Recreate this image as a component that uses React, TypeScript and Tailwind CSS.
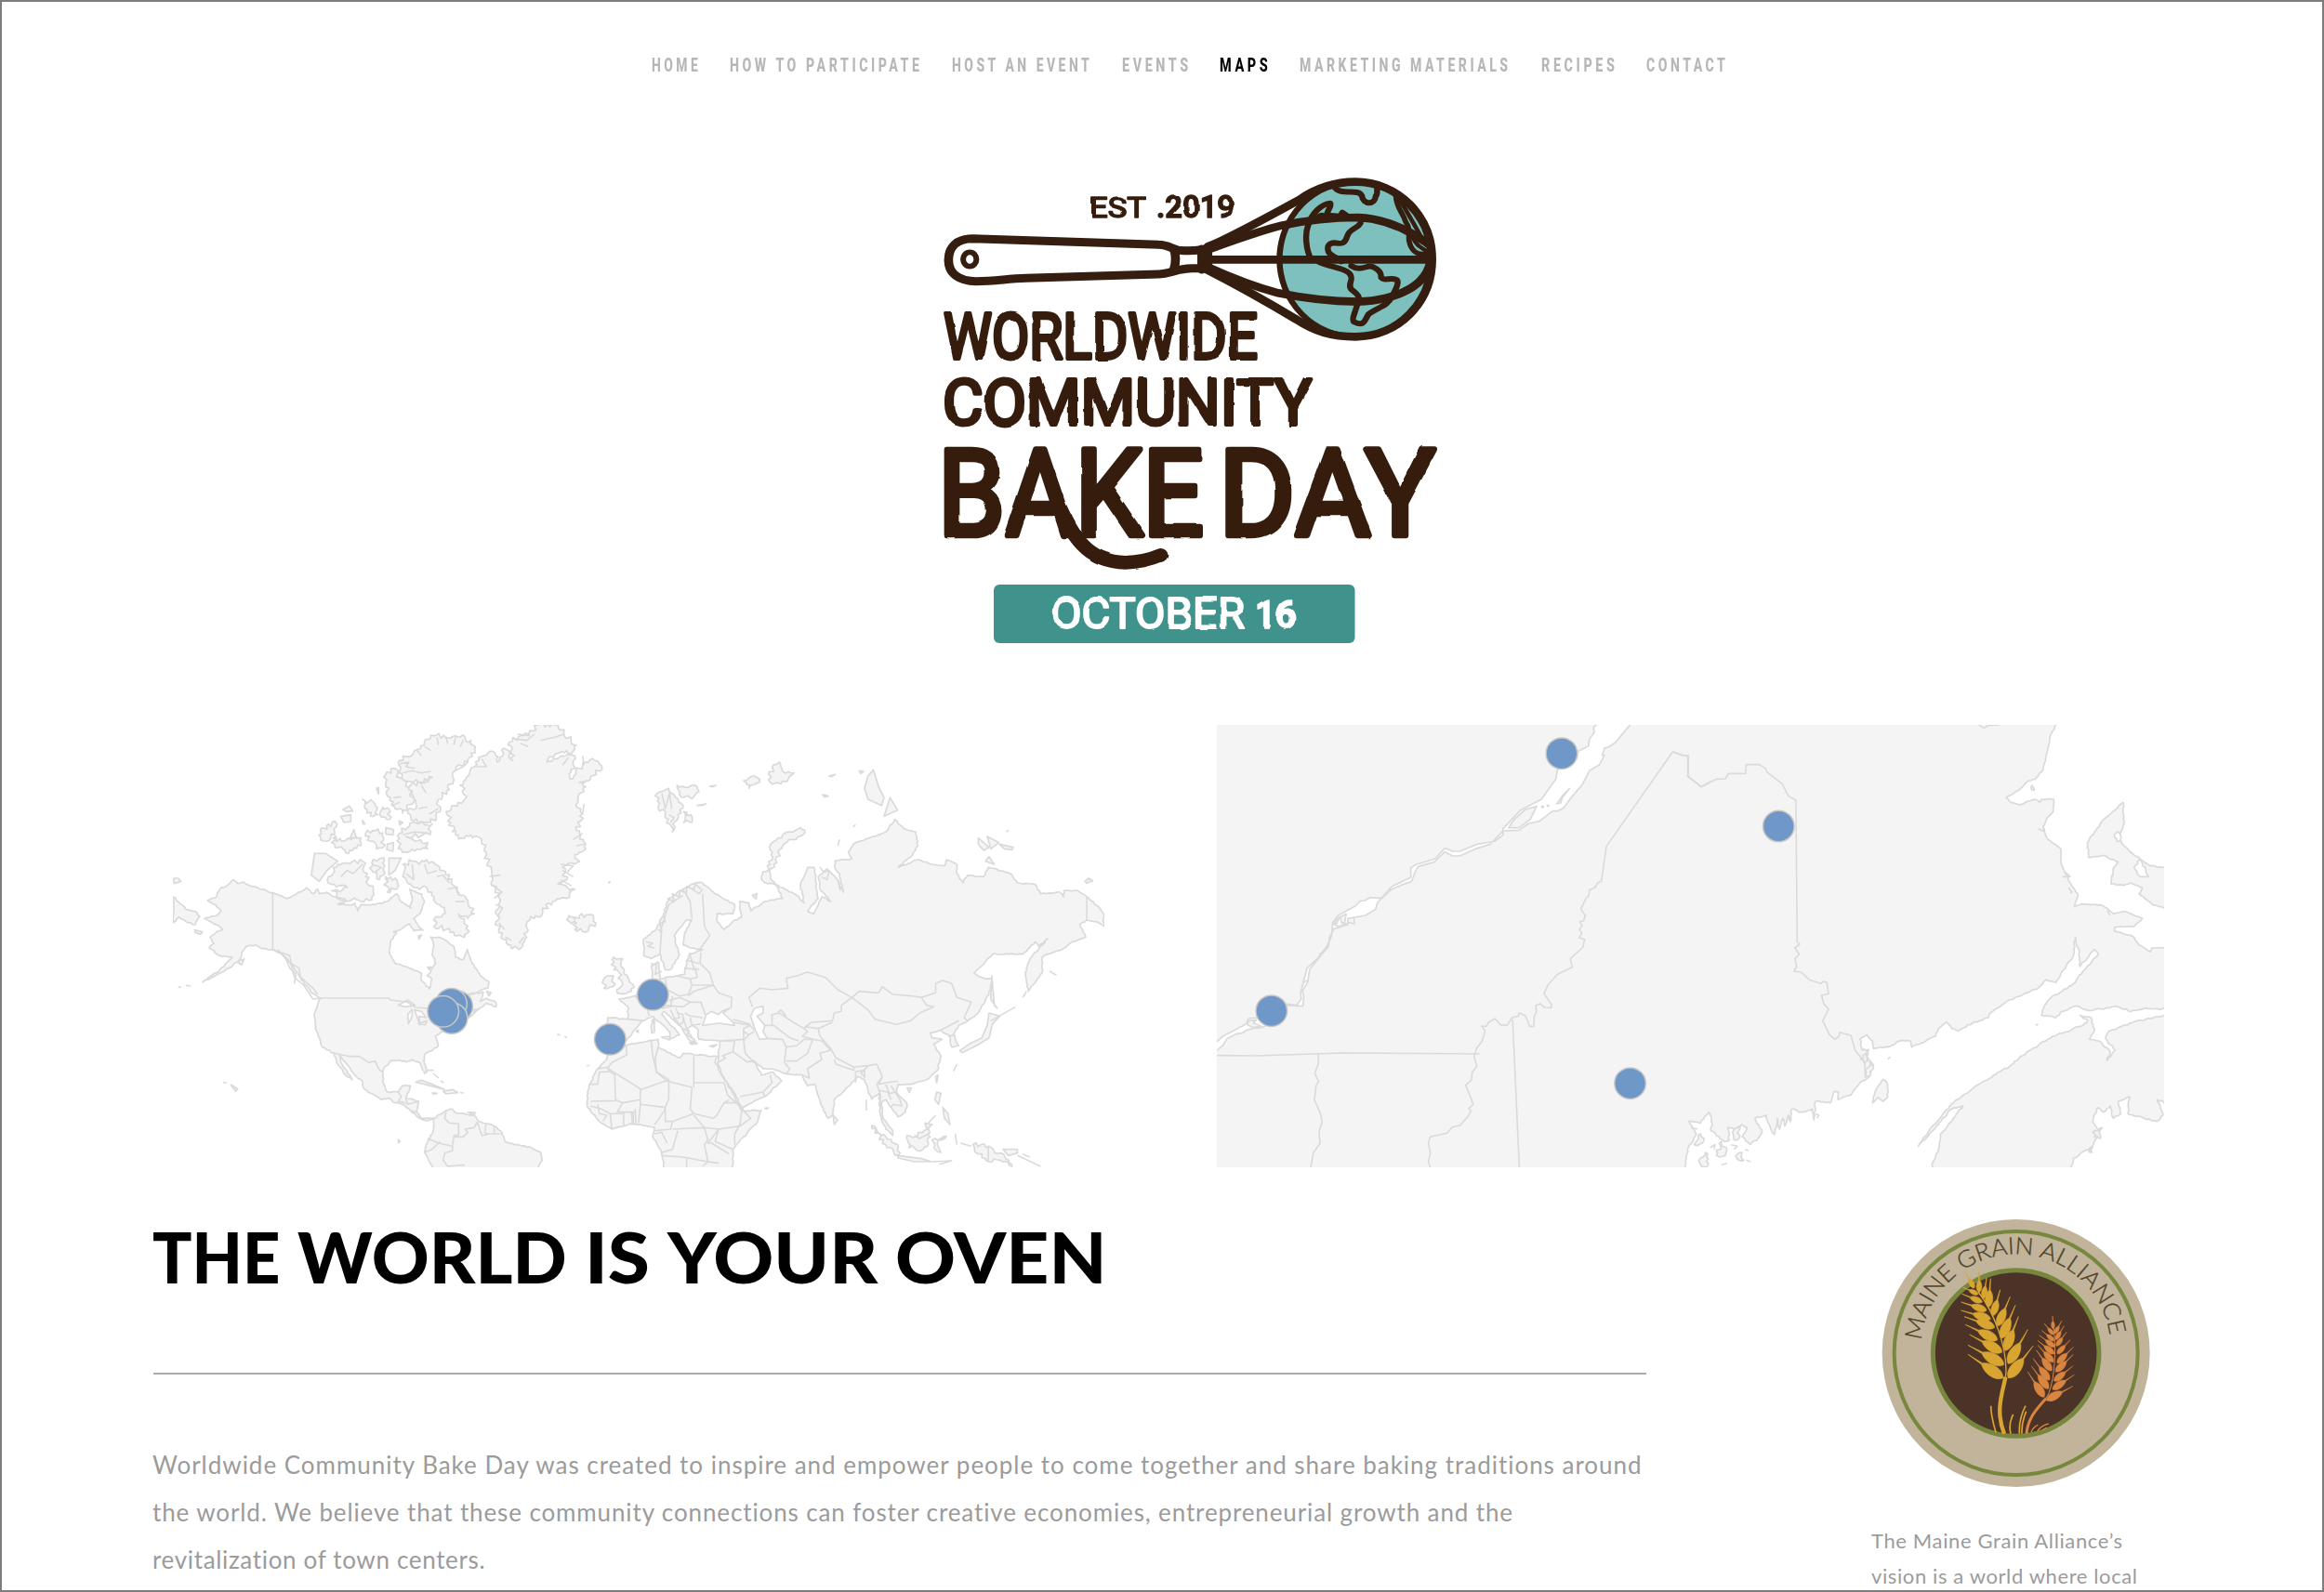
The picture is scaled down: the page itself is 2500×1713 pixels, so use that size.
import { useLayoutEffect, useRef, type ReactNode } from 'react';

/* ---------- text helpers ---------- */

// Squeezes or stretches one line of text to a given width.
function ScaledLine({ width, children }: { width: number; children: ReactNode }) {
  const ref = useRef<HTMLSpanElement>(null);
  useLayoutEffect(() => {
    const el = ref.current;
    if (!el) return;
    const spacing = parseFloat(getComputedStyle(el).letterSpacing) || 0;
    el.style.transform = `scaleX(${width / (el.offsetWidth - spacing)})`;
  }, [width]);
  return (
    <span ref={ref} className="inline-block origin-left whitespace-nowrap">
      {children}
    </span>
  );
}

// Tracks one line of text out or in until it has a given width.
function TrackedLine({ width, text }: { width: number; text: string }) {
  const ref = useRef<HTMLSpanElement>(null);
  useLayoutEffect(() => {
    const el = ref.current;
    if (!el) return;
    el.style.letterSpacing = '0px';
    el.style.letterSpacing = `${(width - el.getBoundingClientRect().width) / (text.length - 1)}px`;
  }, [width, text]);
  return (
    <span className="block">
      <span ref={ref} className="inline-block whitespace-nowrap">
        {text}
      </span>
    </span>
  );
}

/* ---------- navigation ---------- */

const navItems = [
  { label: 'HOME', box: 'w-[49px]', width: 50 },
  { label: 'HOW TO PARTICIPATE', box: 'w-[203px]', width: 204 },
  { label: 'HOST AN EVENT', box: 'w-[148px]', width: 148 },
  { label: 'EVENTS', box: 'w-[70px]', width: 71 },
  { label: 'MAPS', box: 'w-[51px]', width: 52, active: true },
  { label: 'MARKETING MATERIALS', box: 'w-[224px]', width: 224 },
  { label: 'RECIPES', box: 'w-[78px]', width: 79 },
  { label: 'CONTACT', box: 'w-[84px]', width: 85 },
];

function Nav() {
  return (
    <nav className="flex h-7 items-center gap-[35.3px] pl-[699px] font-['Roboto',sans-serif] text-[20px] font-extrabold leading-7 tracking-[5px]">
      {navItems.map((n) => (
        <a key={n.label} className={`${n.box} block shrink-0 ${n.active ? 'text-black' : 'text-[#b7b7b7]'}`}>
          <ScaledLine width={n.width}>{n.label}</ScaledLine>
        </a>
      ))}
    </nav>
  );
}

/* ---------- logo ---------- */

const brown = '#351e10';

function LogoText({ x, y, w, size, children, weight = 400, stroke = 2, fill = brown }: { x: number; y: number; w: number; size: number; children: string; weight?: number; stroke?: number; fill?: string }) {
  return (
    <text x={x} y={y} textLength={w} lengthAdjust="spacingAndGlyphs" fontSize={size} fontWeight={weight} fill={fill} stroke={fill} strokeWidth={stroke} strokeLinejoin="round">
      {children}
    </text>
  );
}

function Logo() {
  return (
    <svg className="block h-[520px] w-[560px]" viewBox="1000 180 560 520" fontFamily="Roboto, sans-serif">
      <defs>
        <filter id="rough" x="-5%" y="-5%" width="110%" height="110%">
          <feTurbulence type="fractalNoise" baseFrequency="0.06" numOctaves="1" seed="4" />
          <feDisplacementMap in="SourceGraphic" scale="3" xChannelSelector="R" yChannelSelector="G" />
        </filter>
        <clipPath id="globe">
          <ellipse cx="1283" cy="297" rx="229" ry="250" />
        </clipPath>
      </defs>
      <g transform="translate(1000 180) scale(.35714 .33333)" fill="none" stroke={brown} strokeLinecap="round" strokeLinejoin="round">
        <ellipse cx="1283" cy="297" rx="229" ry="250" fill="#7ec0bd" strokeWidth="18" />
        <g clipPath="url(#globe)" strokeWidth="18">
          <path d="M1150 298C1133 268 1130 215 1140 188C1150 150 1180 118 1207 116C1212 130 1192 145 1198 155L1236 158L1243 146L1256 156" />
          <path d="M1158 172C1168 160 1176 150 1186 154" strokeWidth="14" />
          <path d="M1298 180C1288 200 1266 196 1258 222C1250 252 1236 246 1218 244C1200 246 1196 258 1202 274C1212 290 1236 294 1240 304" />
          <path d="M1170 304C1210 325 1244 322 1264 342C1282 364 1256 376 1270 394C1286 408 1300 418 1290 436C1284 464 1268 494 1280 500C1308 514 1310 496 1322 474C1350 452 1382 446 1392 418C1400 402 1420 366 1404 362C1386 356 1368 368 1360 356C1362 332 1334 318 1322 320C1302 326 1290 332 1270 318" />
          <path d="M1222 68C1242 92 1292 66 1302 92C1306 122 1342 122 1344 92C1352 86 1344 76 1350 62" />
          <path d="M1404 90C1406 134 1424 142 1434 176C1450 202 1442 214 1444 236C1448 262 1464 288 1496 278" strokeWidth="16" />
          <path d="M1408 90C1424 120 1454 172 1480 224M1452 216C1460 246 1476 262 1504 272" strokeWidth="13" />
        </g>
        <path d="M838 256C880 240 1000 172 1112 106C1170 62 1224 47 1283 47C1410 47 1513 156 1513 297C1513 438 1410 547 1283 547C1210 547 1160 530 1106 492C1000 424 900 366 838 332" strokeWidth="26" />
        <path d="M838 266C900 242 980 210 1060 188C1130 172 1200 162 1290 162C1380 166 1450 206 1508 252" strokeWidth="26" />
        <path d="M838 322C900 352 980 386 1050 406C1130 424 1210 433 1290 434C1410 430 1496 380 1508 306" strokeWidth="26" />
        <path d="M838 298H1506" strokeWidth="26" strokeLinecap="butt" />
        <path d="M130 230C80 230 57 260 57 300C57 344 90 368 140 368C200 368 230 360 290 358L690 345C722 345 748 326 790 326C812 326 826 326 838 326L838 262C814 270 782 270 750 268C728 262 716 250 690 250Z" fill="#fff" strokeWidth="27" />
        <path d="M737 268C742 284 742 310 736 328M820 264V330" strokeWidth="27" />
        <path d="M750 268H810M750 328H810" strokeWidth="22" />
        <ellipse cx="121" cy="297" rx="20" ry="23" strokeWidth="17" />
      </g>
      <g filter="url(#rough)">
        <LogoText x={1172} y={234} w={61} size={32} stroke={1.6}>EST</LogoText>
        <LogoText x={1244} y={234} w={84} size={34} weight={600} stroke={1.4}>.2019</LogoText>
        <LogoText x={1015} y={386} w={338} size={69} stroke={4}>WORLDWIDE</LogoText>
        <LogoText x={1014} y={457} w={397} size={69} stroke={4}>COMMUNITY</LogoText>
        <LogoText x={1009} y={576} w={286} size={129} stroke={6.5}>BAKE</LogoText>
        <LogoText x={1311} y={576} w={233} size={129} stroke={6.5}>DAY</LogoText>
        <path transform="translate(1000 460) scale(.35714 .33333)" d="M388 250C430 345 470 434 590 436C640 434 670 424 696 412" fill="none" stroke={brown} strokeWidth="44" strokeLinecap="round" />
      </g>
      <rect x="1069" y="629" width="388.500" height="63" rx="6" fill="#40938d" />
      <g filter="url(#rough)">
        <LogoText x={1131} y={676} w={208} size={46} stroke={2} fill="#fff">OCTOBER</LogoText>
        <LogoText x={1350} y={676} w={44} size={43} weight={700} stroke={1.6} fill="#fff">16</LogoText>
      </g>
    </svg>
  );
}

/* ---------- maps ---------- */

const land = '#f4f4f4';
const edge = '#dadada';

// Adds small deterministic inlets to a hand-placed coastline.
function coast(points: string, amp: number) {
  const p = points.trim().split(/\s+/).map((s) => s.split(',').map(Number));
  let seed = p.length * 7919 + p[0][0];
  const rnd = () => {
    seed = (seed * 1103515245 + 12345) % 2147483648;
    return seed / 2147483648 - 0.5;
  };
  const out: string[] = [];
  p.forEach(([x, y], i) => {
    const [nx, ny] = p[(i + 1) % p.length];
    const len = Math.hypot(nx - x, ny - y);
    const n = Math.min(20, Math.max(1, Math.round(len / 8)));
    out.push(`${x},${y}`);
    for (let k = 1; k < n; k++) {
      const t = k / n;
      const d = rnd() * amp * 2;
      out.push(`${(x + (nx - x) * t - ((ny - y) / len) * d).toFixed(1)},${(y + (ny - y) * t + ((nx - x) / len) * d).toFixed(1)}`);
    }
  });
  return out.join(' ');
}

function Shapes({ list, amp = 0, fill = land }: { list: string[]; amp?: number; fill?: string }) {
  return (
    <>
      {list.map((p) => (
        <polygon key={p} points={amp ? coast(p, amp) : p} fill={fill} stroke={edge} strokeWidth="1.7" strokeLinejoin="round" vectorEffect="non-scaling-stroke" />
      ))}
    </>
  );
}

function Lines({ list }: { list: string[] }) {
  return (
    <>
      {list.map((p) => (
        <polyline key={p} points={p} fill="none" stroke={edge} strokeWidth="1.6" strokeLinejoin="round" vectorEffect="non-scaling-stroke" />
      ))}
    </>
  );
}

function Pins({ at }: { at: number[][] }) {
  return (
    <>
      {at.map(([x, y]) => (
        <circle key={`${x}-${y}`} cx={x} cy={y} r="16.800" fill="#6f97c8" stroke="#c9c7c3" strokeWidth="1.500" />
      ))}
    </>
  );
}

const americas = [
  '160,597 185,588 200,560 232,541 243,530 258,542 275,537 300,550 350,565 370,572 415,590 440,580 480,555 500,575 515,560 520,575 545,570 580,590 605,600 580,608 620,612 635,605 645,630 655,610 700,610 740,600 750,590 770,575 785,600 815,622 820,590 812,560 850,575 860,600 845,640 825,655 840,680 855,692 825,695 812,672 785,690 760,698 770,700 750,730 748,770 765,800 800,810 850,832 850,855 876,882 884,850 868,840 897,800 885,770 890,740 880,715 905,715 935,730 955,745 960,780 985,788 998,755 1015,800 1040,840 1068,858 1065,880 1020,895 990,902 1020,898 1050,893 1040,922 1060,912 1090,925 1090,940 1060,928 1030,950 1010,970 990,985 940,1010 915,1020 895,1035 905,1065 860,1095 858,1115 868,1150 860,1155 845,1120 820,1110 800,1118 780,1112 750,1115 728,1140 725,1180 740,1215 775,1215 790,1195 815,1195 800,1235 842,1245 835,1280 850,1300 890,1300 870,1308 845,1300 815,1275 790,1255 765,1250 745,1235 720,1240 665,1205 660,1180 640,1165 605,1120 585,1095 590,1120 627,1175 610,1165 580,1125 568,1090 530,1070 520,1040 508,1010 505,960 518,925 525,912 495,895 455,840 430,800 400,770 370,755 335,752 315,740 285,745 270,765 265,785 230,815 190,835 145,860 200,820 240,780 200,775 165,750 180,735 168,715 195,695 208,690 195,678 150,655 190,645 203,632 185,610',
  '890,1300 930,1275 950,1270 960,1282 1020,1290 1035,1310 1085,1325 1110,1345 1120,1375 1160,1385 1205,1395 1235,1410 1240,1435 1225,1462 888,1462 860,1410 865,1385 885,1350 890,1320',
  '50,585 90,625 120,632 135,648 120,675 90,665 68,650 50,668',
];
const arctic = [
  '1225,30 1280,30 1310,45 1310,60 1350,95 1335,120 1280,125 1255,150 1300,130 1345,130 1330,205 1380,150 1410,145 1432,162 1395,205 1360,215 1380,230 1355,280 1365,340 1350,370 1372,400 1380,430 1345,460 1360,470 1305,490 1320,530 1290,545 1345,560 1320,590 1260,605 1240,640 1200,660 1190,700 1165,755 1130,740 1100,690 1090,640 1105,600 1080,530 1060,450 1045,400 1010,385 980,395 950,375 945,345 930,310 990,270 990,235 975,225 1020,165 1035,135 1080,115 1095,150 1115,105 1145,145 1135,85 1170,65 1210,50',
  '890,65 960,65 1010,80 1022,110 1000,150 960,175 940,240 905,270 910,310 880,345 825,340 805,315 835,290 810,230 885,200 850,215 800,215 775,185 775,150 835,110 860,85',
  '760,170 780,200 810,230 825,280 790,315 765,300 750,265 735,230 735,190',
  '790,480 820,470 890,475 920,500 985,580 1020,640 1000,655 970,640 1000,680 990,715 930,690 890,680 890,660 915,650 925,620 890,595 870,560 815,545 790,520',
  '550,520 580,480 660,470 670,520 695,560 690,595 655,600 595,590 560,565 610,555 560,545',
  '780,380 820,345 885,350 878,385 800,390 830,405 870,410 870,430 805,442 775,430',
  '565,395 600,405 655,395 655,420 605,442 570,415',
  '520,385 550,350 578,350 570,385 535,405',
  '670,380 700,372 725,378 728,425 705,430 685,405',
  '690,475 730,460 732,510 715,530 690,500',
  '660,270 700,285 710,320 695,325 668,300',
  '725,295 750,310 748,335 722,328',
  '735,520 765,525 770,560 740,570',
  '1325,645 1345,660 1360,645 1405,645 1413,670 1370,697 1345,690 1350,670 1328,665',
];
const westIslands = [
  '505,445 540,445 580,470 545,500 520,535 495,515',
  '745,460 785,460 765,500 745,515',
  '597,303 618,292 628,308 608,310',
  '590,325 622,320 622,342 600,345',
  '620,395 632,368 640,395',
  '735,362 760,368 758,385 735,382',
  '740,415 760,410 758,438 738,432',
  '705,235 712,232 712,253',
  '50,525 65,525 74,535 52,542',
  '118,692 143,698 138,706 120,700',
  '255,795 278,785 270,805',
  '832,1183 850,1177 885,1190 925,1207 880,1195',
  '920,1213 950,1207 968,1217 930,1221',
  '885,1218 900,1219 890,1222',
  '1000,1280 1025,1282 1018,1290',
  '235,1192 257,1205 250,1213',
  '775,1368 781,1375 776,1379',
  '870,812 882,812 874,820',
  '840,712 850,708 842,722',
  '1060,890 1075,895 1068,905',
  '1015,950 1035,948 1020,958',
  '660,338 668,350 662,350',
  '778,340 790,345 780,353',
];
const westLakes = ['775,935 805,918 830,935 800,940', '808,995 806,965 820,948 820,970', '828,950 850,955 865,975 842,970 845,998', '840,995 868,985 862,998'];
const westLines = [
  '370,572 370,755',
  '370,755 400,770 430,805 440,845 470,870 500,915 525,912 745,912 750,918 805,925 830,942 870,945 880,980',
  '568,1090 620,1100 650,1100 680,1120 700,1115 712,1140 722,1150',
  '400,765 425,775 430,800 455,815 460,845 480,862 500,880 515,900',
  '385,755 410,780 425,815 445,835 440,865',
  '775,1215 785,1230 775,1245 800,1250',
  '800,1235 805,1255 842,1245',
  '815,1275 835,1280',
  '930,1275 925,1300 940,1315 970,1318 970,1355 955,1355 950,1390 905,1380 870,1365',
  '955,1360 985,1360 1000,1345 990,1335 1020,1330 1030,1312',
  '1030,1312 1045,1355 1070,1350 1105,1350',
  '1058,1320 1055,1345 1065,1352',
  '1085,1325 1085,1350',
  '950,1390 950,1405 925,1412 920,1435 935,1455 990,1450',
  '860,1410 885,1400 910,1375',
  '870,1145 890,1145',
  '888,1155 905,1170',
  '912,1178 922,1186',
  '975,1217 986,1218',
  '210,1184 222,1186',
  '1288,1028 1298,1031',
  '1312,1036 1320,1039',
  '1384,1131 1392,1129',
  '1452,540 1460,536',
  '65,877 75,876',
  '90,871 106,873',
  '1370,130 1375,160',
  '1375,285 1370,320',
];
// Fjords and inner channels of the far north.
const arcticLines = [
  '780,155 810,150 800,165 830,170',
  '790,185 820,178 850,185 880,180',
  '900,70 905,95',
  '930,68 935,92',
  '960,70 955,95',
  '985,80 975,100',
  '860,100 880,112',
  '835,112 850,130',
  '955,180 985,165 1000,150',
  '850,225 865,250',
  '760,265 785,262',
  '755,290 780,280',
  '840,300 870,295',
  '875,318 905,300',
  '1020,165 1060,165 1045,140',
  '1150,75 1190,80 1215,60',
  '1160,60 1200,65',
  '1170,90 1195,100',
  '1235,80 1280,70 1310,60',
  '1305,160 1325,135',
  '1340,400 1370,380',
  '1350,420 1375,415',
  '1300,480 1340,485 1320,505',
  '1300,530 1335,550',
  '1305,500 1340,520',
  '1070,520 1105,515',
  '1075,545 1110,570 1085,590',
  '1090,610 1112,620 1095,650',
  '1100,670 1118,690',
  '1120,715 1140,725',
  '1180,715 1165,735',
  '820,480 825,530 800,510',
  '860,480 870,510 900,500',
  '900,520 920,515 940,540',
  '935,560 960,555 970,580',
  '960,600 990,600',
  '590,520 610,500 630,510 660,480',
  '690,480 720,490 700,505',
  '790,385 830,375 870,380',
];
const eurasia = [
  '355,540 385,570 445,610 440,640 395,640 395,660 415,690 440,665 465,650 458,600 485,605 490,630 530,600 580,590 560,545 620,580 640,605 630,545 650,490 668,490 675,560 680,590 650,632 668,640 690,585 715,600 685,560 680,520 705,495 735,530 750,570 740,510 728,495 728,468 775,462 765,440 785,410 850,385 870,375 895,335 920,365 955,375 960,420 945,450 905,490 960,465 1000,480 1035,485 1040,465 1070,480 1070,510 1087,540 1100,515 1145,520 1158,490 1220,510 1240,540 1290,545 1305,575 1360,570 1370,585 1370,565 1410,565 1435,585 1470,620 1483,640 1483,680 1460,665 1435,660 1415,675 1432,715 1395,730 1365,755 1325,770 1310,780 1310,830 1270,890 1262,830 1275,785 1325,720 1300,745 1290,730 1255,770 1230,770 1170,770 1118,832 1150,850 1168,850 1160,900 1130,960 1100,985 1075,1000 1060,1030 1075,1065 1055,1070 1050,1035 1025,1015 995,1025 1000,1040 1028,1045 1005,1060 1025,1100 1015,1145 985,1175 935,1190 905,1190 900,1215 930,1255 925,1280 905,1295 885,1265 870,1240 858,1250 862,1300 890,1340 890,1355 870,1335 855,1290 850,1220 830,1238 820,1210 810,1175 790,1165 780,1180 725,1240 722,1290 708,1300 690,1260 670,1190 650,1195 635,1160 590,1157 550,1140 525,1140 500,1115 520,1160 550,1150 577,1180 530,1230 465,1265 440,1210 410,1160 397,1120 405,1050 345,1045 340,1010 325,1000 310,1010 335,1055 320,1050 290,1000 245,955 240,965 290,1030 262,1045 262,1020 215,970 185,985 140,1050 90,1060 88,975 145,980 145,940 120,915 165,905 175,890 215,850 210,810 230,795 235,850 280,840 305,835 310,790 320,770 355,755 320,750 300,740 305,700 325,660 310,660 275,710 280,740 290,770 265,820 250,820 235,770 210,785 190,775 190,720 225,690 245,640 260,590 300,560 335,540',
  '85,1110 90,1095 140,1065 210,1048 230,1045 230,1070 290,1105 300,1090 380,1100 397,1100 390,1120 440,1220 465,1275 520,1275 510,1310 440,1400 440,1462 248,1462 240,1410 215,1360 220,1330 180,1320 150,1318 100,1335 65,1310 32,1265 30,1245 35,1195 60,1140',
];
const eurasiaRough = [
  '228,250 260,235 275,255 300,290 270,375 250,320 250,310 230,300',
  '283,225 340,230 345,245 325,268 290,255',
  '302,310 322,320 325,345 302,345',
  '470,210 500,195 515,215 485,235',
  '540,190 570,150 580,180 612,185 575,220 545,215',
  '520,520 545,480 550,410 585,380 630,362 643,378 580,420 555,480 545,510 560,547 525,535',
  '105,780 130,785 125,810 145,845 160,870 155,890 115,895 130,870 120,830 105,820',
  '80,845 105,840 103,875 78,880',
  '930,1355 960,1355 990,1330 995,1360 975,1400 935,1395',
  '1115,1385 1160,1390 1205,1425 1225,1455 1190,1435 1160,1440 1130,1415',
  '1000,1370 1040,1358 1015,1380 1025,1410 1005,1395',
  '830,1323 870,1360 905,1395 905,1420 870,1385',
];
const eurasiaIslands = [
  '835,175 850,230 865,265 858,290 820,270 810,235 820,195',
  '882,265 903,305 865,325',
  '1130,395 1160,425 1145,435 1130,415',
  '1155,390 1188,410 1165,430',
  '1190,415 1228,425 1225,433 1203,430',
  '1150,470 1160,455 1175,480',
  '1430,535 1440,525 1452,533 1435,541',
  '1160,960 1190,970 1170,995 1160,1040 1130,1062 1085,1088 1078,1082 1105,1060 1140,1040 1155,1000',
  '1168,840 1175,935 1183,945 1165,915',
  '1010,1165 1017,1160 1013,1185',
  '930,1202 942,1202 936,1217',
  '1013,1215 1025,1220 1018,1255 1008,1240',
  '1030,1265 1045,1285 1050,1320 1035,1300',
  '722,1290 735,1305 725,1320',
  '903,1420 970,1430 998,1440 950,1440 905,1428',
  '980,1315 1000,1320 985,1335',
  '210,1000 218,985 220,1020 212,1025',
  '240,1038 262,1035 262,1047',
  '375,1067 395,1062 385,1070',
  '212,985 218,978 220,995',
  '495,580 508,575 505,592',
  '1200,1400 1240,1400 1240,1412 1215,1420',
  '710,195 728,190 718,197',
  '692,255 708,260 698,263',
  '795,178 807,180 800,187',
  '375,228 393,225 382,230',
  '340,290 365,285 352,290',
  '168,1018 174,1015 174,1023',
  '530,1267 540,1266 535,1270',
  '318,1055 340,1058 325,1062',
];
const seas = [
  '355,1000 365,965 380,955 400,965 408,955 430,945 412,960 440,990 445,1000 400,993',
  '490,970 500,945 525,938 525,960 508,970 530,1000 525,1020 537,1042 515,1045 503,1015',
];
const eastLines = [
  '300,560 320,600 325,655',
  '325,560 345,575 355,560',
  '355,575 360,680 375,710 350,750',
  '300,580 260,610 240,680 235,770',
  '350,765 348,800 375,830 385,870 325,870 320,850',
  '310,790 345,800',
  '318,765 330,815 345,820',
  '303,815 335,820 340,845 320,850 280,840',
  '250,850 255,885 290,905 315,900 325,870',
  '385,870 400,895 437,910 435,945',
  '315,905 330,890 385,870',
  '225,945 245,935 300,940 320,925',
  '260,920 290,910 320,925 350,925 362,965',
  '305,960 320,970 355,975',
  '320,975 325,1000 350,995',
  '300,975 310,1010',
  '280,945 290,975 270,980',
  '270,905 265,940 240,945',
  '200,950 205,970',
  '145,980 190,985',
  '225,850 230,870',
  '165,905 180,925',
  '265,950 275,975 292,1000',
  '285,960 300,965 300,990 285,1000',
  '300,1010 318,1020 308,1030 325,1040',
  '440,990 490,1000 470,1010 470,1045 405,1050',
  '440,980 485,995 500,1015',
  '470,1020 485,1030 500,1020',
  '485,1030 470,1050 475,1090 500,1120',
  '405,1050 445,1050 440,1085 410,1098',
  '440,1085 480,1118 500,1115',
  '398,1120 420,1105 410,1098',
  '460,1230 525,1215 550,1185 545,1160',
  '525,1215 530,1230',
  '535,1042 580,1045 590,1070 585,1120 600,1140 590,1157',
  '530,1000 555,1000 600,1040 625,1050',
  '550,1000 550,965 570,960 610,990 640,1010 660,990 720,985 725,960 745,955 745,935 775,910 735,885 700,845 670,835 650,828 620,840 590,848 595,880 550,885 515,880 485,910 495,940',
  '565,960 575,950 590,970',
  '640,1010 650,1020 635,1035 665,1045',
  '590,1070 620,1065 640,1045 665,1045 650,1090 620,1115 590,1115',
  '660,990 645,1005 680,1010 720,990',
  '665,1045 690,1050 715,1080 685,1090 690,1110 650,1140 655,1170 635,1160',
  '680,1010 685,1035 715,1075 730,1105 780,1135 820,1130 845,1125 860,1165 850,1190 870,1185 905,1180',
  '725,1110 730,1125 780,1145 780,1135',
  '785,1150 810,1145 810,1170',
  '785,1150 785,1185',
  '820,1130 800,1155 810,1165',
  '860,1165 845,1190 855,1225 855,1260',
  '870,1190 880,1220 900,1215',
  '885,1195 910,1240 915,1260 890,1255 885,1265',
  '850,1210 875,1215 885,1240',
  '775,910 795,890 850,895 860,875 890,900 945,905 970,910 985,935 1005,940 965,960 940,985 900,997 840,980 820,950 775,910',
  '970,910 1010,895 1010,865 1030,855 1055,865 1070,910 1110,925 1090,975 1100,985',
  '1025,1015 1075,985',
  '1045,1035 1065,1030',
  '1435,585 1435,660',
  '90,1055 90,1000',
  '140,1065 142,1095 100,1120 90,1135 60,1140',
  '90,1135 90,1150 65,1150 60,1190 35,1190',
  '90,1140 180,1205 180,1240 130,1250 110,1240',
  '90,1145 108,1160 110,1243 40,1245',
  '180,1208 260,1175 225,1150 215,1100 210,1048',
  '230,1070 222,1105 225,1150 255,1180 325,1200',
  '330,1100 330,1200',
  '330,1185 415,1185',
  '325,1200 320,1270 330,1285 270,1310',
  '260,1180 260,1235 250,1265 180,1255 180,1240',
  '250,1265 250,1310 270,1310 265,1335 220,1340',
  '250,1270 230,1305 220,1320',
  '180,1255 175,1315',
  '130,1250 115,1280 160,1280 160,1318',
  '133,1280 133,1325',
  '155,1280 158,1318',
  '165,1270 168,1318',
  '40,1260 70,1270 95,1285 100,1335',
  '60,1255 65,1285 85,1290 75,1310',
  '95,1285 130,1285',
  '430,1240 415,1250 395,1290 385,1300 330,1285',
  '415,1185 425,1225 470,1270',
  '415,1250 450,1250 490,1300 460,1325 400,1335',
  '330,1290 360,1330 400,1335 390,1375 440,1400',
  '270,1335 360,1330 370,1370 360,1385 370,1440 300,1425 240,1420',
  '285,1340 270,1400 240,1410',
  '220,1350 240,1345 255,1380',
  '310,1425 310,1460',
  '400,1335 370,1380 380,1380 430,1415',
  '355,1455 370,1440 400,1445',
  '445,1350 445,1385',
  '465,1275 460,1320 445,1350',
  '1158,1390 1158,1440',
  '1240,1420 1305,1455',
  '1165,985 1235,940',
  '1265,890 1255,910',
  '1330,825 1350,838',
  '950,1355 965,1365 990,1350',
  '1000,1440 1055,1437 1020,1448',
  '1010,1290 990,1315',
  '1065,1350 1070,1385',
  '1080,1380 1110,1390',
  '1255,1415 1275,1425',
  '1070,1125 1060,1148',
  '815,1240 815,1275',
  '1215,370 1208,375',
  '785,352 778,360',
  '740,400 735,420',
  '90,540 95,536',
  '150,1318 160,1318',
  // Norwegian fjords
  '255,590 275,600 270,575 290,585 290,565 310,572 310,552 330,560 335,545 350,560',
  '195,730 215,735 200,745 220,750',
  '230,690 240,700 235,670 250,665 245,645',
  '210,800 225,805 222,835 240,825',
  // Svalbard and Ob estuary detail
  '240,250 250,300 262,250 268,300',
  '260,320 275,330 265,345',
  '685,490 695,505 710,500 705,530 690,520',
  '735,530 742,565',
];

function WorldMap() {
  return (
    <svg className="block h-[476px] w-[1002px] shrink-0" viewBox="186 780 1002 476">
      <g transform="translate(170 770) scale(.33333)">
        <Shapes list={americas} amp={2.2} />
        <Shapes list={arctic} amp={9} />
        <Shapes list={westIslands} />
        <Shapes list={westLakes} fill="#fff" />
        <Lines list={westLines} />
        <Lines list={arcticLines} />
      </g>
      <g transform="translate(620 770) scale(.38265 .33333)">
        <Shapes list={eurasia} amp={2} />
        <Shapes list={eurasiaRough} amp={7} />
        <Shapes list={eurasiaIslands} />
        <Shapes list={seas} fill="#fff" />
        <Lines list={eastLines} />
      </g>
      <Pins at={[[491.7, 1082.7], [485.5, 1080.2], [486, 1095.5], [476.7, 1088.3], [656.3, 1118.3], [702.3, 1070.3]]} />
    </svg>
  );
}

const river = [
  '1225,20 1203,37 1205,55 1190,75 1187,98 1155,115 1150,140 1090,175 1085,205 1040,270 975,305 920,365 920,385 895,405 840,415 785,438 764,438 738,428 708,462 645,482 632,492 632,522 572,552 540,590 505,587 488,597 475,598 458,615 435,628 405,645 388,668 385,710 370,745 340,785 308,815 298,855 288,895 290,915 275,935 240,930 155,975 125,978 118,995 45,1035 20,1058 20,1086 45,1065 58,1043 85,1028 105,1025 120,1015 140,1010 165,1008 200,990 240,935 295,938 298,905 293,890 310,860 316,820 350,775 375,745 378,715 392,688 435,675 435,655 490,645 522,625 528,603 570,562 600,548 635,535 645,505 655,487 705,473 738,440 762,453 785,453 835,430 880,415 920,372 970,370 1000,348 1035,340 1075,308 1090,308 1110,298 1135,262 1168,222 1190,178 1222,158 1237,128 1230,128 1237,105 1252,100 1270,88 1325,20',
];
const riverIslands = ['1025,293 1005,335 970,362 937,362 955,335 990,303', '1128,235 1105,260 1088,285 1100,282 1105,265', '125,985 150,982 140,992 165,1003 140,1007 122,998', '392,668 410,650 400,672', '412,650 430,640 425,670 415,668', '1040,295 1046,292 1045,297', '1058,290 1064,290 1060,293'];
const quebecLines = [
  '1568,213 1540,230 1497,197 1497,130 1480,128 1450,117 1243,422 1227,535 1215,541 1207,555 1190,563 1188,582 1180,588 1163,625 1177,645 1172,662 1160,665 1167,678 1158,690 1166,702 1158,717 1175,722 1170,747 1130,785 1137,812 1090,835 1060,870 1048,898 1072,933 1070,943 1050,942 1035,930 1022,937 1025,955 1018,970 1016,1003 1003,1003 990,968 970,960 968,970 948,975 933,1000 912,998 895,978 875,990 868,1003 853,1002 864,1018 855,1050 837,1075 830,1100 838,1132 825,1150 820,1178 803,1193 820,1235 827,1255 813,1268 820,1275 812,1292 785,1323 762,1328 745,1348 692,1360 687,1380 693,1412 687,1440 693,1460',
  '25,1097 150,1098 420,1089 847,1092',
  '343,1092 343,1125 332,1155 344,1180 336,1195 331,1240 350,1285 355,1310 345,1345 349,1380 328,1410 319,1460',
  '950,980 971,1460',
  '388,672 405,680 440,668 455,672 455,655',
  '370,745 355,768 345,768',
  '298,860 310,855',
];
const maritimeWater = [
  '35,1470 45,1400 72,1350 48,1310 85,1315 110,1280 120,1300 118,1340 160,1375 175,1370 170,1330 190,1335 215,1320 230,1330 215,1360 240,1385 265,1365 278,1345 255,1300 290,1290 300,1320 315,1352 325,1300 332,1335 342,1300 348,1325 360,1290 366,1310 370,1270 400,1280 435,1270 440,1305 445,1245 490,1250 500,1215 515,1215 515,1240 555,1225 580,1190 610,1168 625,1130 605,1100 610,1078 590,1080 583,1045 605,1030 622,1050 625,1075 670,1070 715,1048 740,1050 745,1070 820,1035 828,1010 855,990 870,1010 890,1018 920,998 985,975 990,960 1045,920 1140,880 1165,853 1195,862 1220,820 1250,775 1255,715 1268,765 1270,810 1315,755 1328,770 1285,820 1250,865 1215,890 1180,910 1160,935 1150,967 1195,975 1215,955 1255,938 1300,952 1385,938 1430,955 1470,945 1540,947 1540,967 1500,975 1440,988 1360,1020 1350,1043 1380,1080 1355,1113 1365,1085 1330,1050 1300,1045 1315,1020 1305,975 1270,967 1295,985 1280,1000 1185,1035 1085,1100 1055,1128 960,1187 920,1218 875,1250 810,1325 765,1390 800,1350 870,1270 905,1260 880,1295 835,1350 828,1400 808,1450 820,1470',
  '1240,1470 1250,1430 1310,1390 1330,1340 1310,1310 1325,1265 1345,1280 1365,1260 1375,1300 1398,1285 1390,1245 1425,1230 1420,1285 1470,1300 1510,1310 1530,1290 1512,1240 1540,1250 1540,1470',
];
const gulfWater = [
  '1200,20 1178,65 1165,130 1155,175 1130,205 1110,210 1080,240 1040,265 1055,280 1080,288 1130,270 1145,280 1150,270 1188,270 1187,310 1165,335 1155,360 1170,400 1210,430 1212,480 1245,550 1265,580 1253,617 1275,608 1340,612 1375,640 1410,632 1465,655 1440,680 1380,683 1378,695 1435,712 1455,740 1490,762 1495,750 1540,750 1540,20',
];
const maritimeIslands = [
  '1405,280 1408,350 1395,385 1400,410 1435,445 1490,485 1540,490 1540,622 1500,612 1455,575 1465,555 1430,540 1408,548 1367,543 1375,490 1390,473 1345,452 1298,458 1293,410 1320,370 1345,335',
  '622,1250 630,1215 655,1175 668,1185 670,1230 655,1245 640,1232',
];
const coastIslands = [
  '65,1385 85,1350 95,1375 75,1388',
  '80,1440 100,1410 110,1445 95,1457',
  '135,1420 150,1375 165,1410 145,1425',
  '185,1345 210,1330 205,1365 190,1370',
  '195,1420 215,1410 220,1435 205,1435',
  '1310,1345 1340,1330 1335,1365 1315,1360',
  '1300,1400 1310,1395 1308,1410',
  '600,1160 615,1115 625,1130 612,1165',
  '585,1110 605,1085 605,1105 595,1120',
  '1120,225 1128,240 1120,240',
];
const maritimeLines = [
  '0,117 30,128 47,130 47,197 87,230 135,205 163,204 172,187 226,187 228,158 268,158 290,172 292,182 340,220 360,260 383,273 387,730 395,738 380,750 393,770 380,785 385,810 377,825 400,828 425,853 460,865 470,858 480,862 485,898 463,903 470,930 485,948 467,985 488,1030 505,1045 518,1035 520,1022 555,1033 568,1080 598,1120 600,1170',
  '955,30 970,40 985,32 1018,30',
  '670,1108 678,1102',
  '1132,1000 1140,996',
  '1140,365 1160,375 1155,355',
  '1215,520 1240,520 1225,505',
  '1235,555 1245,570 1240,572',
  '1355,630 1365,645',
  '115,1395 130,1385 128,1400',
  '180,1385 200,1390 190,1400',
  '225,1400 235,1405',
  '55,1330 75,1335',
  '445,1285 455,1290 448,1300',
  '150,1450 168,1445',
  '228,1435 242,1440',
];

function MaineMap() {
  return (
    <svg className="block h-[476px] w-[1019px] shrink-0" viewBox="1309 780 1019 476">
      <rect x="1309" y="780" width="1019" height="476" fill={land} />
      <g transform="translate(1300 770) scale(.34439 .33333)">
        <Shapes list={river} fill="#fff" />
        <Shapes list={riverIslands} />
        <Lines list={quebecLines} />
      </g>
      <g transform="translate(1800 770) scale(.34439 .33333)">
        <Shapes list={maritimeWater} amp={2.5} fill="#fff" />
        <Shapes list={gulfWater} amp={1.5} fill="#fff" />
        <Shapes list={maritimeIslands} amp={2} />
        <Shapes list={['1440,490 1455,465 1475,490 1485,520 1460,520', '1378,385 1390,375 1398,400 1385,405']} amp={4} fill="#fff" />
        <Shapes list={coastIslands} amp={7} />
        <Lines list={maritimeLines} />
      </g>
      <Pins at={[[1679.9, 810.7], [1367.8, 1087.7], [1753.6, 1165.7], [1913.3, 889]]} />
    </svg>
  );
}

/* ---------- Maine Grain Alliance seal ---------- */

const goldKernels = [
  [465, 578, 352, 502], [468, 535, 352, 472], [462, 495, 357, 438], [447, 455, 344, 406], [438, 415, 340, 380], [425, 388, 330, 360], [412, 360, 330, 333], [398, 333, 333, 307], [385, 308, 335, 285], [372, 288, 343, 236],
  [482, 578, 562, 475], [482, 532, 545, 422], [472, 490, 515, 380], [460, 450, 505, 343], [448, 410, 488, 316], [432, 377, 456, 293], [418, 350, 425, 257], [402, 322, 412, 255], [388, 302, 388, 235],
];
const copperKernels = [
  [598, 640, 545, 558], [612, 613, 557, 540], [615, 585, 562, 515], [622, 555, 572, 488], [628, 527, 577, 472], [630, 500, 577, 457], [632, 478, 582, 440], [630, 458, 590, 425], [628, 438, 598, 402],
  [605, 650, 690, 605], [625, 615, 695, 568], [630, 588, 690, 540], [635, 558, 692, 502], [640, 530, 693, 478], [640, 500, 682, 455], [637, 475, 670, 430], [635, 455, 662, 410], [632, 435, 655, 393], [627, 420, 625, 378],
];

function kernel([x, y, tx, ty]: number[]) {
  const dx = tx - x;
  const dy = ty - y;
  const at = (t: number, w: number) => `${(x + dx * t - dy * w).toFixed(1)} ${(y + dy * t + dx * w).toFixed(1)}`;
  return `M${x} ${y}C${at(0.1, 0.17)} ${at(0.42, 0.17)} ${at(0.6, 0.018)}L${tx} ${ty}L${at(0.6, -0.018)}C${at(0.42, -0.17)} ${at(0.1, -0.17)} ${x} ${y}Z`;
}

function Seal() {
  return (
    <svg className="block h-[290px] w-[290px]" viewBox="73 63 870 870" fill="none">
      <circle cx="507" cy="498" r="432" fill="#c1b49b" />
      <circle cx="507" cy="498" r="393" stroke="#78873e" strokeWidth="12" />
      <circle cx="507" cy="498" r="268" fill="#4b3327" stroke="#78873e" strokeWidth="15" />
      <path id="seal-arc" d="M202 460A306 306 0 0 1 812 460" />
      <text fontFamily="Lato, sans-serif" fontSize="76" fontWeight="300" fill="#4f4227" stroke="#4f4227" strokeWidth="1">
        <textPath href="#seal-arc" startOffset="2" textLength="890" lengthAdjust="spacingAndGlyphs">
          MAINE GRAIN ALLIANCE
        </textPath>
      </text>
      <g fill="#d9a531" stroke="#d9a531">
        {goldKernels.map((k) => (
          <path key={k.join()} d={kernel(k)} strokeWidth="2" />
        ))}
        <path d="M470 758C440 680 470 620 475 560C476 480 440 370 385 300" fill="none" strokeWidth="4" />
        <path d="M469 758C438 680 466 620 473 575" fill="none" strokeWidth="13" />
        <path d="M442 754C432 720 426 695 426 668M490 758C484 735 488 715 498 696M518 758C516 720 526 690 538 668M526 758C524 725 534 700 540 686" fill="none" strokeWidth="5" />
      </g>
      <g fill="#d98540" stroke="#d98540">
        {copperKernels.map((k) => (
          <path key={k.join()} d={kernel(k)} strokeWidth="1.500" />
        ))}
        <path d="M541 758C545 700 590 665 612 630C635 570 636 480 628 410" fill="none" strokeWidth="3" />
        <path d="M541 758C545 705 580 672 604 644" fill="none" strokeWidth="9" />
        <path d="M556 753C560 742 566 734 578 730M576 750C584 738 594 730 612 726M592 747L606 738" fill="none" strokeWidth="4" />
      </g>
    </svg>
  );
}

/* ---------- page ---------- */

const headingWords = [
  { text: 'THE', box: 'w-[137px]', width: 137 },
  { text: 'WORLD', box: 'w-[290px]', width: 290 },
  { text: 'IS', box: 'w-[70px]', width: 70 },
  { text: 'YOUR', box: 'w-[226px]', width: 226 },
  { text: 'OVEN', box: 'w-[228px]', width: 228 },
];

export default function App() {
  return (
    <div className="flex h-[1713px] w-[2500px] flex-col overflow-hidden border-2 border-[#7d7d7d] bg-white">
      <header className="flex flex-col pt-[54px]">
        <Nav />
        <div className="pl-[998px] pt-24">
          <Logo />
        </div>
      </header>
      <section className="flex gap-[121px] pl-[184px] pt-20">
        <WorldMap />
        <MaineMap />
      </section>
      <main className="flex pl-[162px]">
        <article className="w-[1607px] shrink-0">
          <h1 className="mt-[46px] flex h-[100px] gap-[19px] font-['Lato',sans-serif] text-[76px] font-black leading-[100px] text-black">
            {headingWords.map((w) => (
              <span key={w.text} className={`${w.box} block shrink-0`}>
                <ScaledLine width={w.width}>{w.text}</ScaledLine>
              </span>
            ))}
          </h1>
          <hr className="mt-[75px] ml-px border-0 border-t-2 border-[#ababab]" />
          <div className="mt-[72px] font-['Lato',sans-serif] text-[26px] leading-[51px] text-[#9b9b9b]">
            <TrackedLine width={1602} text="Worldwide Community Bake Day was created to inspire and empower people to come together and share baking traditions around" />
            <TrackedLine width={1464} text="the world. We believe that these community connections can foster creative economies, entrepreneurial growth and the" />
            <TrackedLine width={358} text="revitalization of town centers." />
          </div>
        </article>
        <aside className="flex flex-col pl-[242px] pt-[55px]">
          <div className="pl-[11px]">
            <Seal />
          </div>
          <div className="mt-[38px] font-['Lato',sans-serif] text-[22px] leading-[38px] text-[#9b9b9b]">
            <TrackedLine width={270} text="The Maine Grain Alliance’s" />
            <TrackedLine width={286} text="vision is a world where local" />
          </div>
        </aside>
      </main>
    </div>
  );
}
